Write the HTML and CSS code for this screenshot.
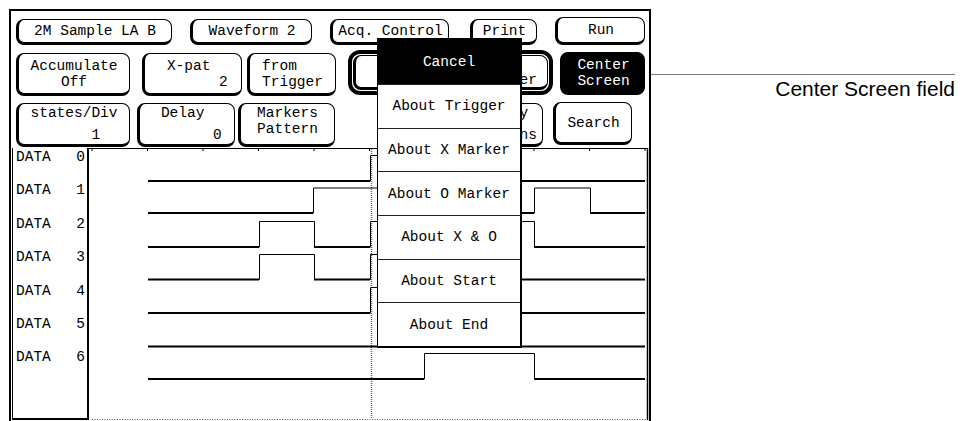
FILE: index.html
```html
<!DOCTYPE html>
<html lang="en">
	<head>
		<meta charset="UTF-8" />
		<meta name="viewport" content="width=device-width, initial-scale=1.0" />
		<title>Center Screen field</title>

		<link rel="stylesheet" href="styles.css">
	</head>
	<body>
		<div class="page">
			<div class="screen">
				<div class="row row-top">
					<div class="btn b-config">2M Sample LA B</div>
					<div class="btn b-wave">Waveform 2</div>
					<div class="btn b-acq">Acq. Control</div>
					<div class="btn b-print">Print</div>
					<div class="btn b-run">Run</div>
				</div>
				<div class="row row-mid">
					<div class="btn b-accum"><span>Accumulate</span><span>Off</span></div>
					<div class="btn b-xpat"><span>  X-pat   </span><span>        2 </span></div>
					<div class="btn b-from"><span>from   </span><span>Trigger</span></div>
					<div class="ring">
						<div class="btn b-inner"><span> </span><span>er</span></div>
					</div>
					<div class="btn b-center"><span>Center</span><span>Screen</span></div>
				</div>
				<div class="row row-low">
					<div class="btn split b-states"><span>states/Div</span><span class="val">       1  </span></div>
					<div class="btn split b-delay"><span>  Delay   </span><span class="val">        0 </span></div>
					<div class="btn split b-markers"><span>Markers</span><span>Pattern</span></div>
					<div class="btn split b-display"><span>y </span><span class="val">ns</span></div>
					<div class="btn b-search">Search</div>
				</div>
				<div class="wave">
					<div class="labels">
						<div class="lbl"><span>DATA</span><span>0</span></div>
						<div class="lbl"><span>DATA</span><span>1</span></div>
						<div class="lbl"><span>DATA</span><span>2</span></div>
						<div class="lbl"><span>DATA</span><span>3</span></div>
						<div class="lbl"><span>DATA</span><span>4</span></div>
						<div class="lbl"><span>DATA</span><span>5</span></div>
						<div class="lbl"><span>DATA</span><span>6</span></div>
					</div>
					<svg class="trace" width="560" height="273" viewBox="89 148 560 273">
						<!-- frame, ticks, cursor -->
						<g stroke="#000" stroke-width="1" fill="none">
							<path d="M89 148.5 H647" />
							<path d="M92 148 V151 M147.5 148 V151 M203 148 V151 M258.5 148 V151 M314 148 V151 M369.5 148 V151 M425 148 V151 M480 148 V151 M534 148 V151 M589.5 148 V151 M645 148 V151" />
							<path d="M647.5 148 V420" stroke-width="1.5" />
						</g>
						<path d="M92 419.5 H647" stroke="#555" stroke-width="1" stroke-dasharray="1 1.5" />
						<path d="M371.5 149 V419" stroke="#666" stroke-width="1.5" stroke-dasharray="1 1" />
						<!-- signals: thin edges and highs -->
						<g stroke="#000" stroke-width="1" fill="none">
							<path d="M148 181 H370.5 V155.5 H450 V181 H645" />
							<path d="M148 213 H313.5 V188 H480 V213 H534.5 V188 H590.5 V213 H645" />
							<path d="M148 247 H259.5 V221.5 H314.5 V247 H370.5 V221.5 H534.5 V247 H645" />
							<path d="M148 279.5 H259.5 V254.5 H314.5 V279.5 H370.5 V254.5 H450 V279.5 H645" />
							<path d="M148 313 H370.5 V287.5 H470 V313 H645" />
							<path d="M148 346.5 H645" />
							<path d="M148 379 H424.5 V353.5 H534.5 V379 H645" />
						</g>
						<!-- signals: heavy lows -->
						<g stroke="#000" stroke-width="2" fill="none">
							<path d="M148 181 H370 M450 181 H645" />
							<path d="M148 213 H313 M480 213 H534 M590 213 H645" />
							<path d="M148 247 H259 M314 247 H370 M534 247 H645" />
							<path d="M148 279.5 H259 M314 279.5 H370 M450 279.5 H645" />
							<path d="M148 313 H370 M470 313 H645" />
							<path d="M148 346.5 H645" />
							<path d="M148 379 H424 M534 379 H645" />
						</g>
					</svg>
				</div>

				<div class="menu">
					<div class="menu-item cancel">Cancel</div>
					<div class="menu-item">About Trigger</div>
					<div class="menu-item">About X Marker</div>
					<div class="menu-item">About O Marker</div>
					<div class="menu-item">About X &amp; O</div>
					<div class="menu-item">About Start</div>
					<div class="menu-item">About End</div>
				</div>
			</div>

			<div class="note">
				<div class="note-line"></div>
				<div class="note-text">Center Screen field</div>
			</div>
		</div>
	</body>
</html>
```

FILE: styles.css
```css
html,
body {
	margin: 0;
	height: 100%;
	overflow: hidden;
	background: #fff;
	color: #000;
}

.page {
	display: flex;
	align-items: flex-start;
	padding: 9px 0 0 9px;
	box-sizing: border-box;
	height: 421px;
}

.screen {
	position: relative;
	width: 642px;
	height: 412px;
	box-sizing: border-box;
	border: 2px solid #000;
	border-bottom: none;
	padding-top: 6px;
}

.row {
	display: flex;
	align-items: flex-start;
	padding-left: 5px;
}

.btn {
	box-sizing: border-box;
	display: flex;
	flex-direction: column;
	align-items: center;
	justify-content: center;
	border: 1px solid #000;
	border-left-width: 3px;
	border-bottom-width: 3px;
	border-radius: 8px;
	background: #fff;
	font: 14.5px/16px 'Liberation Mono', monospace;
	white-space: pre;
}

/* top row */
.row-top .btn {
	height: 26px;
	margin-top: 2px;
}
.b-config {
	width: 156px;
}
.b-wave {
	width: 122px;
	margin-left: 18px;
}
.b-acq {
	width: 119px;
	margin-left: 18px;
}
.b-print {
	width: 67px;
	margin-left: 21px;
}
.row-top .b-run {
	width: 90px;
	margin-left: 18px;
	height: 28px;
	margin-top: 0;
}

/* middle row */
.row-mid {
	margin-top: 8px;
}
.row-mid > .btn {
	height: 43px;
}
.b-accum {
	width: 114px;
}
.b-xpat {
	width: 100px;
	margin-left: 12px;
}
.b-from {
	width: 89px;
	margin-left: 5px;
}
.ring {
	box-sizing: border-box;
	width: 205px;
	height: 45px;
	margin: -3px 0 0 12px;
	border: 4px solid #000;
	border-radius: 12px;
	padding: 1px;
	display: flex;
}
.b-inner {
	flex: 1;
	align-items: flex-end;
	padding-right: 10px;
}
.row-mid .b-center {
	width: 85px;
	height: 43px;
	margin: -1px 0 0 7px;
	background: #000;
	color: #fff;
}

/* bottom row */
.row-low {
	margin-top: 7px;
}
.row-low > .btn {
	height: 44px;
}
.btn.split {
	justify-content: flex-start;
	padding-top: 1px;
}
.split .val {
	margin-top: 6px;
}
.b-states {
	width: 114px;
}
.b-delay {
	width: 98px;
	margin-left: 7px;
}
.b-markers {
	width: 97px;
	margin-left: 3px;
}
.b-display {
	width: 103px;
	margin-left: 105px;
	align-items: flex-end;
	padding-right: 5px;
}
.row-low .b-search {
	width: 79px;
	height: 43px;
	margin: -1px 0 0 10px;
}

/* waveform area */
.wave {
	display: flex;
	margin-top: 1px;
}
.labels {
	box-sizing: border-box;
	width: 77px;
	height: 272px;
	margin-left: 1px;
	padding: 0 2px 0 3px;
	border-left: 1px solid #000;
	border-right: 2px solid #000;
	border-bottom: 2px solid #000;
	font: 14.5px/18px 'Liberation Mono', monospace;
}
.lbl {
	display: flex;
	justify-content: space-between;
	height: 33.4px;
}
.trace {
	flex: none;
	display: block;
}

/* popup menu */
.menu {
	position: absolute;
	left: 366px;
	top: 27px;
	width: 145px;
	height: 310px;
	box-sizing: border-box;
	display: flex;
	flex-direction: column;
	background: #fff;
	border: 1px solid #000;
	border-right-width: 2px;
	border-bottom-width: 2px;
}
.menu-item {
	flex: 1;
	display: flex;
	align-items: center;
	justify-content: center;
	border-top: 1px solid #222;
	font: 14.5px 'Liberation Mono', monospace;
	white-space: pre;
}
.menu-item.cancel {
	flex: none;
	height: 45px;
	border-top: none;
	background: #000;
	color: #fff;
}

/* callout */
.note {
	width: 304px;
	margin-top: 65px;
}
.note-line {
	border-top: 1px solid #7a7a7a;
}
.note-text {
	margin-top: 2px;
	text-align: right;
	font: 21px/24px 'Liberation Sans', Arial, sans-serif;
}
```
